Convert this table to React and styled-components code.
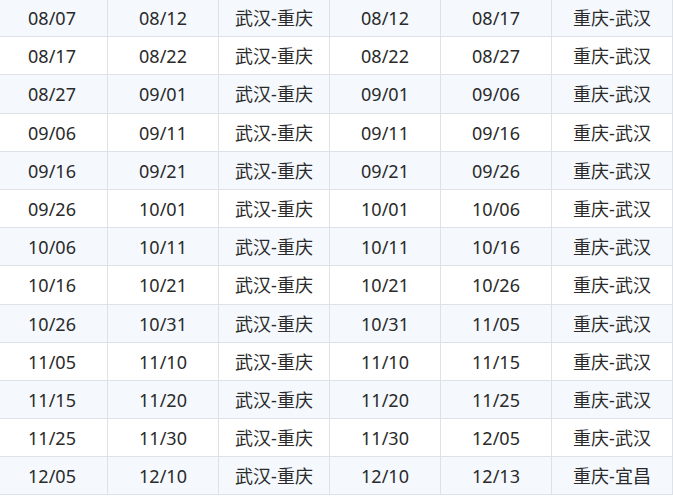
import React from "react";
import styled, { createGlobalStyle } from "styled-components";

const Global = createGlobalStyle`
  html, body { margin: 0; padding: 0; background: #ffffff; overflow: hidden; }
  body { font-family: "Noto Sans", "Noto Sans CJK SC", sans-serif; }
`;

const Table = styled.div`
  display: grid;
  grid-template-columns: 111px 111px 111px 111px 111px 1fr;
  width: 676px;
  margin: -1px 0 0 -3px;
  font-family: "Noto Sans", "Noto Sans CJK SC", sans-serif;
  font-size: 18px;
  color: #2a2a2a;
`;

const Cell = styled.div`
  height: 38.2px;
  box-sizing: border-box;
  display: flex;
  align-items: center;
  justify-content: center;
  border-right: 1px solid #dde1e8;
  border-bottom: 1px solid #dde1e8;
  background: ${(p) => (p.$striped ? "#f5f9fe" : "#ffffff")};
  white-space: nowrap;
  line-height: 1;
  padding-top: 1px;
`;

const rows = [
  ["08/07", "08/12", "武汉-重庆", "08/12", "08/17", "重庆-武汉"],
  ["08/17", "08/22", "武汉-重庆", "08/22", "08/27", "重庆-武汉"],
  ["08/27", "09/01", "武汉-重庆", "09/01", "09/06", "重庆-武汉"],
  ["09/06", "09/11", "武汉-重庆", "09/11", "09/16", "重庆-武汉"],
  ["09/16", "09/21", "武汉-重庆", "09/21", "09/26", "重庆-武汉"],
  ["09/26", "10/01", "武汉-重庆", "10/01", "10/06", "重庆-武汉"],
  ["10/06", "10/11", "武汉-重庆", "10/11", "10/16", "重庆-武汉"],
  ["10/16", "10/21", "武汉-重庆", "10/21", "10/26", "重庆-武汉"],
  ["10/26", "10/31", "武汉-重庆", "10/31", "11/05", "重庆-武汉"],
  ["11/05", "11/10", "武汉-重庆", "11/10", "11/15", "重庆-武汉"],
  ["11/15", "11/20", "武汉-重庆", "11/20", "11/25", "重庆-武汉"],
  ["11/25", "11/30", "武汉-重庆", "11/30", "12/05", "重庆-武汉"],
  ["12/05", "12/10", "武汉-重庆", "12/10", "12/13", "重庆-宜昌"],
];

export default function App() {
  return (
    <>
      <Global />
      <Table>
        {rows.map((r, i) =>
          r.map((c, j) => (
            <Cell key={`${i}-${j}`} $striped={i % 2 === 0}>
              {c}
            </Cell>
          ))
        )}
      </Table>
    </>
  );
}
